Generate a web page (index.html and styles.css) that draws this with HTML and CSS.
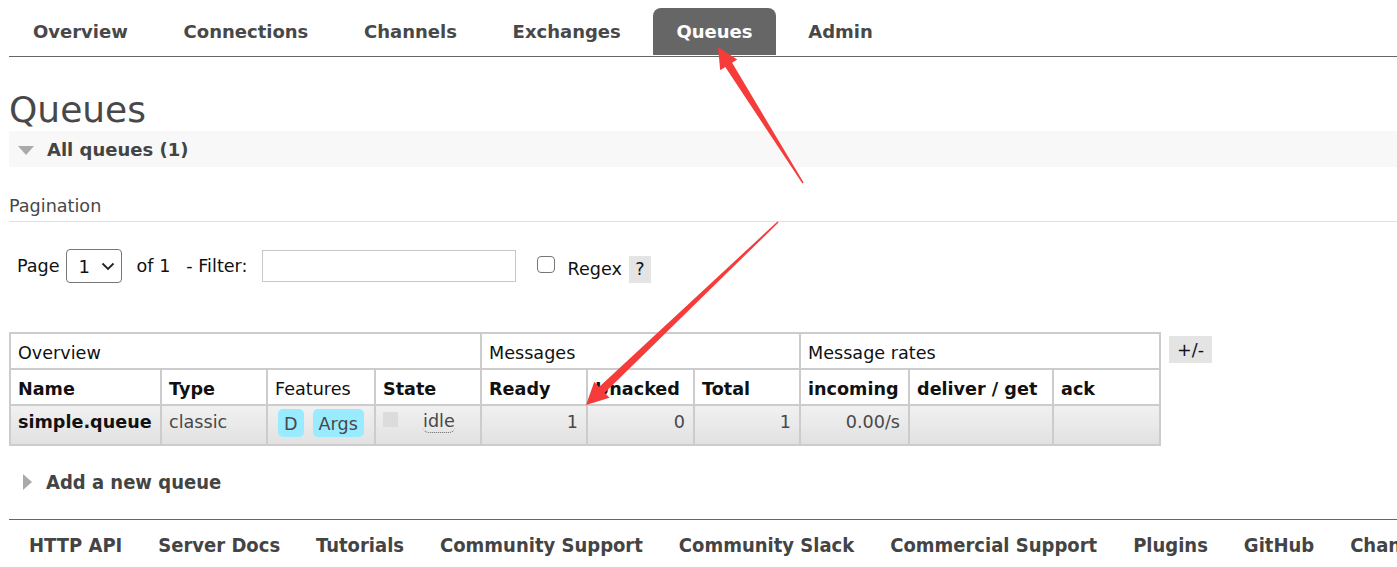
FILE: index.html
```html
<!DOCTYPE html>
<html>
<head>
<meta charset="utf-8">
<title>Queues</title>
<link rel="stylesheet" href="styles.css">
</head>
<body>
<div class="page">
  <nav class="nav">
    <a class="tab">Overview</a>
    <a class="tab">Connections</a>
    <a class="tab">Channels</a>
    <a class="tab">Exchanges</a>
    <a class="tab active">Queues</a>
    <a class="tab">Admin</a>
  </nav>

  <h1 class="title">Queues</h1>

  <div class="section-bar">
    <span class="tri-down"></span>
    <span>All queues (1)</span>
  </div>

  <h3 class="pagination">Pagination</h3>

  <div class="filter-row">
    <span class="lbl">Page</span>
    <div class="select">
      <span>1</span>
      <svg class="chev" width="14" height="9" viewBox="0 0 14 9"><path d="M1.5 1.5 L7 7 L12.5 1.5" fill="none" stroke="#222" stroke-width="1.8"/></svg>
    </div>
    <span class="of">of 1</span>
    <span class="flt">- Filter:</span>
    <input class="filter-input" type="text">
    <span class="checkbox"></span>
    <span class="regex">Regex</span>
    <span class="help">?</span>
  </div>

  <div class="table-area">
    <table class="list">
      <colgroup>
        <col class="c-name"><col class="c-type"><col class="c-feat"><col class="c-state">
        <col class="c-ready"><col class="c-unack"><col class="c-total">
        <col class="c-inc"><col class="c-del"><col class="c-ack">
      </colgroup>
      <thead>
        <tr class="group-row">
          <th colspan="4">Overview</th>
          <th colspan="3">Messages</th>
          <th colspan="3">Message rates</th>
        </tr>
        <tr class="head-row">
          <th>Name</th>
          <th>Type</th>
          <th class="plain">Features</th>
          <th>State</th>
          <th>Ready</th>
          <th>Unacked</th>
          <th>Total</th>
          <th>incoming</th>
          <th>deliver / get</th>
          <th>ack</th>
        </tr>
      </thead>
      <tbody>
        <tr class="data-row">
          <td class="qname">simple.queue</td>
          <td class="qtype">classic</td>
          <td class="feat"><span class="badge">D</span><span class="badge">Args</span></td>
          <td class="state"><span class="sq"></span><span class="idle">idle</span></td>
          <td class="num">1</td>
          <td class="num">0</td>
          <td class="num">1</td>
          <td class="num">0.00/s</td>
          <td></td>
          <td></td>
        </tr>
      </tbody>
    </table>
    <span class="toggle">+/-</span>
  </div>

  <div class="add-row">
    <span class="tri-right"></span>
    <span class="add-text">Add a new queue</span>
  </div>

  <footer class="footer">
    <a>HTTP API</a>
    <a>Server Docs</a>
    <a>Tutorials</a>
    <a>Community Support</a>
    <a>Community Slack</a>
    <a>Commercial Support</a>
    <a>Plugins</a>
    <a>GitHub</a>
    <a>Changelog</a>
  </footer>
</div>

<svg class="arrows" width="1397" height="567" viewBox="0 0 1397 567">
  <polygon fill="#f63b3b" points="718,47 737.2,59.6 732.1,62.8 803.6,182.6 802.4,183.4 725.3,67 720.2,70.2"/>
  <polygon fill="#f63b3b" points="586,405 594.3,381.8 599.1,386.9 777.5,221.5 778.5,222.5 604.7,392.7 609.5,397.8"/>
</svg>
</body>
</html>
```

FILE: styles.css
```css
html, body {
  margin: 0;
  padding: 0;
  background: #fff;
}
body {
  position: relative;
  width: 1397px;
  height: 567px;
  overflow: hidden;
  font-family: "DejaVu Sans", Verdana, sans-serif;
  font-size: 17.6px;
  color: #484848;
}
.page {
  padding-left: 9px;
}

/* nav */
.nav {
  display: flex;
  padding: 8px 0 1px 1px;
  border-bottom: 1px solid #666;
  gap: 9.7px;
}
.tab {
  display: block;
  height: 45px;
  line-height: 44px;
  padding: 2px 23px 0;
  font-size: 18px;
  font-weight: bold;
  color: #484848;
  border-radius: 8px 8px 0 0;
}
.tab.active {
  background: #666;
  color: #fff;
}

.title {
  margin: 32px 0 1px;
  font-size: 36px;
  line-height: 41px;
  font-weight: normal;
  color: #484848;
}

.section-bar {
  display: flex;
  align-items: center;
  height: 36px;
  background: #f8f8f8;
  font-size: 18px;
  font-weight: bold;
  color: #444;
}
.tri-down {
  width: 0;
  height: 0;
  margin-left: 9px;
  margin-right: 13px;
  margin-top: 2px;
  border-left: 8px solid transparent;
  border-right: 8px solid transparent;
  border-top: 9px solid #aaa;
}

.pagination {
  margin: 28px 0 0;
  font-size: 17.6px;
  line-height: 22px;
  font-weight: normal;
  padding-bottom: 4px;
  border-bottom: 1px solid #e0e0e0;
  color: #484848;
}

.filter-row {
  display: flex;
  align-items: center;
  height: 34px;
  margin-top: 27px;
  padding-left: 8px;
  color: #111;
}
.lbl { margin-right: 6px; }
.select {
  box-sizing: border-box;
  width: 56px;
  height: 34px;
  border: 1px solid #767676;
  border-radius: 4px;
  display: flex;
  align-items: center;
  padding-left: 12px;
  gap: 11px;
  font-size: 18px;
}
.chev { margin-top: 1px; }
.of { margin-left: 15px; }
.flt { margin-left: 16px; }
.filter-input {
  box-sizing: border-box;
  width: 254px;
  height: 32px;
  margin: 0 0 0 15px;
  border: 1px solid #c8c8c8;
  padding: 0;
  outline: none;
}
.checkbox {
  box-sizing: border-box;
  width: 18px;
  height: 17px;
  margin-left: 21px;
  margin-top: -3px;
  border: 1.5px solid #767676;
  border-radius: 4px;
}
.regex { margin-left: 12px; margin-top: 6px; }
.help {
  width: 22px;
  height: 27px;
  margin-left: 7px;
  margin-top: 6px;
  background: #e4e4e4;
  display: flex;
  align-items: center;
  justify-content: center;
}

/* table */
.table-area {
  display: flex;
  align-items: flex-start;
  margin-top: 49px;
}
.list {
  border-collapse: collapse;
  table-layout: fixed;
  width: 1150px;
  color: #111;
}
.c-name { width: 151px; }
.c-type { width: 106px; }
.c-feat { width: 108px; }
.c-state { width: 106px; }
.c-ready { width: 106px; }
.c-unack { width: 107px; }
.c-total { width: 106px; }
.c-inc { width: 109px; }
.c-del { width: 144px; }
.c-ack { width: 107px; }
.list th, .list td {
  border: 2px solid #ccc;
  padding: 0 7px;
  text-align: left;
  white-space: nowrap;
  overflow: hidden;
}
.list th {
  box-sizing: border-box;
  height: 36px;
  padding-top: 3px;
}
.group-row th { font-weight: normal; }
.head-row th { font-weight: bold; }
.head-row th.plain { font-weight: normal; }
.data-row td {
  height: 40px;
  padding-top: 6px;
  padding-bottom: 0;
  vertical-align: top;
  background: linear-gradient(#f1f1f1, #e1e1e1);
  color: #484848;
  box-sizing: border-box;
}
.data-row td.qname {
  font-weight: bold;
  color: #111;
}
.data-row td.num {
  text-align: right;
  padding-right: 8px;
}
.data-row td.feat {
  padding-left: 10px;
  padding-top: 3px;
}
.badge {
  display: inline-block;
  height: 28px;
  line-height: 30px;
  padding: 0 6px;
  margin-right: 9px;
  background: #99ebff;
  border-radius: 5px;
  vertical-align: top;
}
.data-row td.state { padding-top: 4px; }
.sq {
  display: inline-block;
  width: 15px;
  height: 15px;
  background: #dcdcdc;
  vertical-align: top;
  margin-top: 2px;
}
.idle {
  display: inline-block;
  margin-left: 25px;
  border-bottom: 1px dotted #666;
  border-radius: 0 0 6px 6px;
  line-height: 22px;
  vertical-align: top;
}
.toggle {
  margin-left: 8px;
  margin-top: 4px;
  width: 43px;
  height: 27px;
  background: #e4e4e4;
  color: #111;
  display: flex;
  align-items: center;
  justify-content: center;
}

/* add new */
.add-row {
  display: flex;
  align-items: center;
  height: 26px;
  margin-top: 23px;
}
.tri-right {
  width: 0;
  height: 0;
  margin-left: 14px;
  margin-right: 14px;
  border-top: 8px solid transparent;
  border-bottom: 8px solid transparent;
  border-left: 9px solid #aaa;
}
.add-text {
  font-family: "DejaVu Sans Condensed", "DejaVu Sans", sans-serif;
  font-weight: bold;
  font-size: 20px;
  color: #444;
}

/* footer */
.footer {
  margin-top: 24px;
  border-top: 1px solid #666;
  display: flex;
  gap: 36px;
  padding: 13px 0 0 20px;
  white-space: nowrap;
}
.footer a {
  font-family: "DejaVu Sans Condensed", "DejaVu Sans", sans-serif;
  font-weight: bold;
  font-size: 20px;
  color: #444;
  line-height: 24px;
}

.arrows {
  position: absolute;
  left: 0;
  top: 0;
  pointer-events: none;
}
```
